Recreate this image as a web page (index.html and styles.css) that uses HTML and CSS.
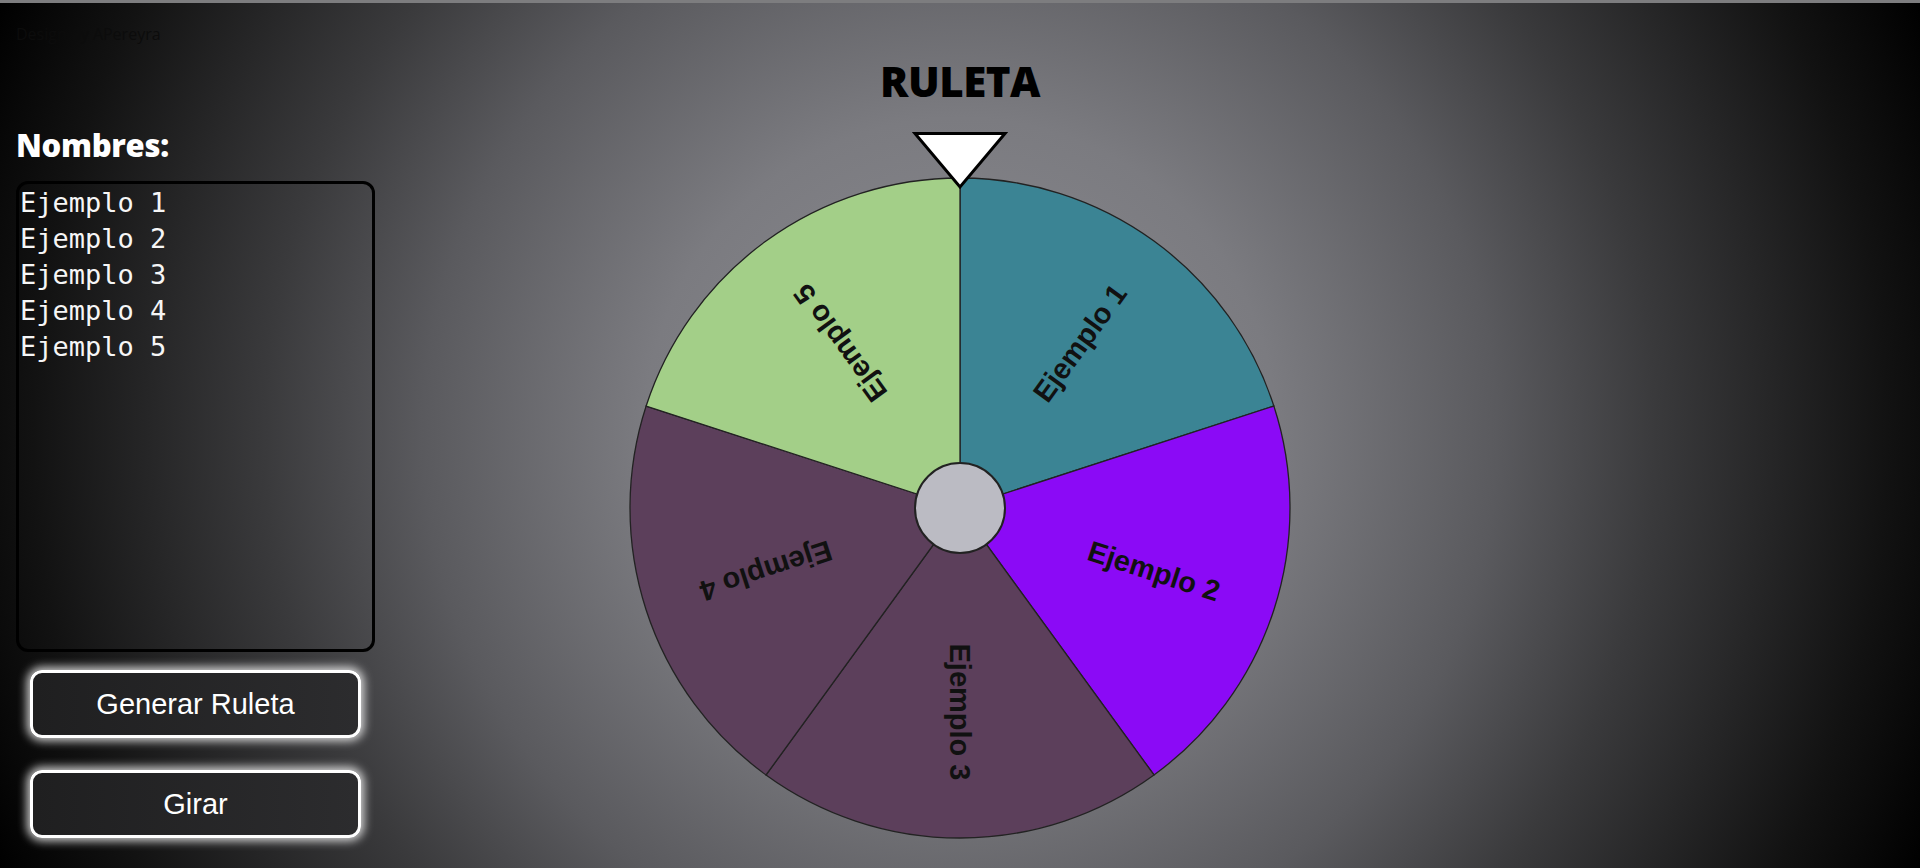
FILE: index.html
```html
<!DOCTYPE html>
<html lang="es">
<head>
    <meta charset="UTF-8">
    <meta name="viewport" content="width=device-width, initial-scale=1.0">
    <title>Ruleta</title>
    <link rel="stylesheet" href="styles.css">
</head>
<body>
    <div class="credit">Design by APereyra</div>

    <div class="layout">
        <div class="side">
            <h2>Nombres:</h2>
            <textarea id="names" spellcheck="false">Ejemplo 1
Ejemplo 2
Ejemplo 3
Ejemplo 4
Ejemplo 5</textarea>
            <button class="button" id="generate">Generar Ruleta</button>
            <button class="button" id="spin">Girar</button>
        </div>

        <div class="main">
            <h1>RULETA</h1>
            <svg class="wheel" width="672" height="712" viewBox="0 0 672 712">
                <g class="slices">
                    <path d="M336,378 L336,48 A330,330 0 0 1 649.849,276.024 Z" fill="#3b8494"/>
                    <path d="M336,378 L649.849,276.024 A330,330 0 0 1 529.969,644.976 Z" fill="#8b0af6"/>
                    <path d="M336,378 L529.969,644.976 A330,330 0 0 1 142.031,644.976 Z" fill="#5c3f5b"/>
                    <path d="M336,378 L142.031,644.976 A330,330 0 0 1 22.151,276.024 Z" fill="#5c3f5b"/>
                    <path d="M336,378 L22.151,276.024 A330,330 0 0 1 336,48 Z" fill="#a3cf88"/>
                </g>
                <g class="labels">
                    <text transform="translate(336 378) rotate(-54) translate(204 0)">Ejemplo 1</text>
                    <text transform="translate(336 378) rotate(18) translate(204 0)">Ejemplo 2</text>
                    <text transform="translate(336 378) rotate(90) translate(204 0)">Ejemplo 3</text>
                    <text transform="translate(336 378) rotate(162) translate(204 0)">Ejemplo 4</text>
                    <text transform="translate(336 378) rotate(234) translate(204 0)">Ejemplo 5</text>
                </g>
                <circle class="hub" cx="336" cy="378" r="45"/>
                <path class="pointer" d="M291,3.5 L381,3.5 L336,57 Z"/>
            </svg>
        </div>

        <div class="filler"></div>
    </div>
</body>
</html>
```

FILE: styles.css
```css
* {
    box-sizing: border-box;
}
body {
    margin: 0;
    min-height: 100vh;
    overflow: hidden;
    border-top: 3px solid #7d7d7f;
    font-family: "Open Sans", Arial, sans-serif;
    background: radial-gradient(circle at 50% 50%, #8d8d93 0%, #7b7b80 30%, #5a5a5e 51%, #3a3a3c 66%, #121212 88%, #000000 100%);
}
.credit {
    padding: 21px 0 0 16px;
    font-size: 16px;
    line-height: 20px;
    color: #0c0c0c;
}
.layout {
    display: grid;
    grid-template-columns: 1fr auto 1fr;
}
.side {
    padding-left: 16px;
    width: 375px;
}
.side h2 {
    margin: 80px 0 0;
    font-size: 31px;
    font-weight: 800;
    line-height: 42px;
    letter-spacing: -0.3px;
    color: #ffffff;
}
.side textarea {
    display: block;
    width: 359px;
    height: 471px;
    margin-top: 15px;
    padding: 1px 1px;
    border: 3px solid #000000;
    border-radius: 12px;
    background: transparent;
    color: #f6f6f6;
    font-family: "DejaVu Sans Mono", "Liberation Mono", monospace;
    font-size: 27px;
    line-height: 36px;
    resize: none;
    outline: none;
}
.button {
    display: block;
    width: 331px;
    height: 68px;
    margin: 18px auto 0 14px;
    border: 3px solid #ffffff;
    border-radius: 12px;
    background: linear-gradient(to right, #1f1f20, #2c2c2e);
    box-shadow: 0 0 10px 3px rgba(255, 255, 255, 0.8);
    color: #ffffff;
    font-family: "Liberation Sans", Arial, sans-serif;
    font-size: 29px;
    cursor: pointer;
}
#spin {
    margin-top: 32px;
}
.main {
    display: flex;
    flex-direction: column;
    align-items: center;
}
.main h1 {
    margin: 8px 0 0;
    font-size: 42px;
    font-weight: 800;
    line-height: 57px;
    letter-spacing: -0.5px;
    color: #000000;
}
.wheel {
    display: block;
    margin-top: 21px;
}
.slices path {
    stroke: #222222;
    stroke-width: 1.3;
}
.labels text {
    font-family: "Liberation Sans", Arial, sans-serif;
    font-size: 29px;
    font-weight: 700;
    fill: #111111;
    text-anchor: middle;
    dominant-baseline: central;
}
.hub {
    fill: #bbbbc3;
    stroke: #222222;
    stroke-width: 2;
}
.pointer {
    fill: #ffffff;
    stroke: #000000;
    stroke-width: 3;
}
```
